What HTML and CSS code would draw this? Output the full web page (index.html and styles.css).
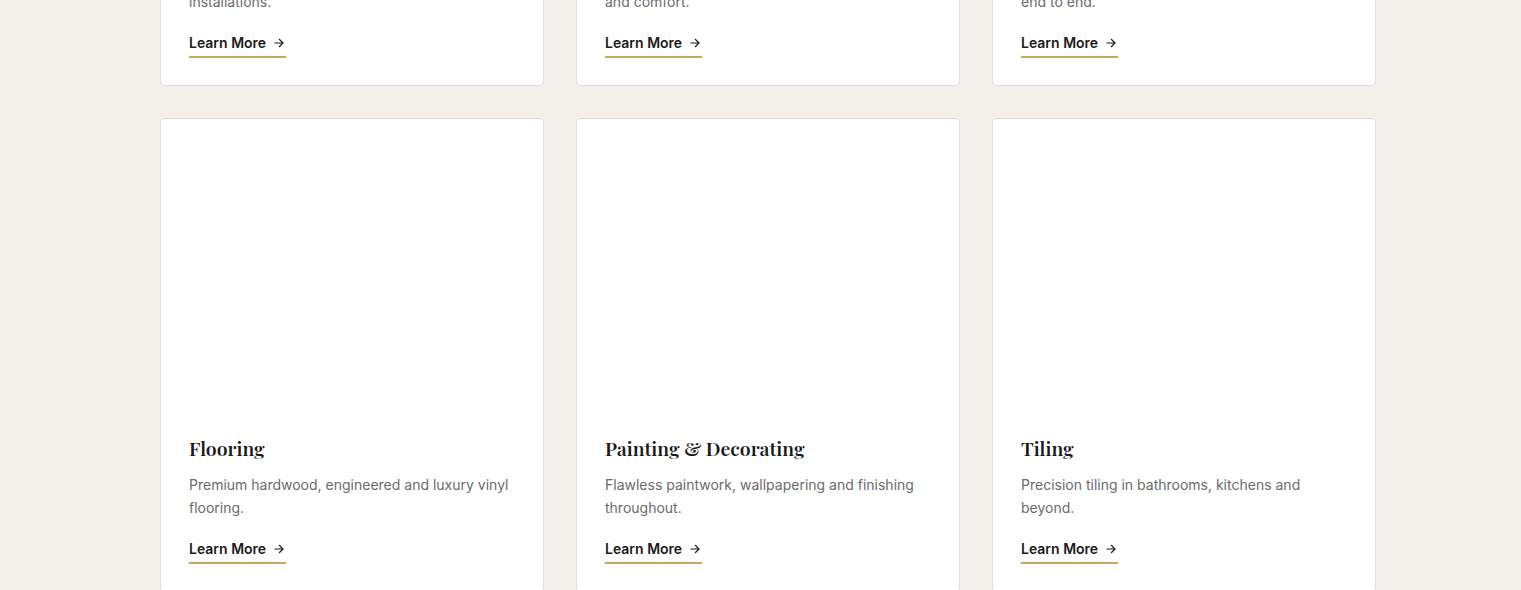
FILE: index.html
```html
<!DOCTYPE html>
<html lang="en">
<head>
    <meta charset="UTF-8">
    <meta name="viewport" content="width=device-width, initial-scale=1.0">
    <title>Our Services</title>
    <link rel="stylesheet" href="styles.css">
</head>
<body>
    <section class="services">
        <div class="service-grid">
            <div class="service-card">
                <div class="service-image"></div>
                <div class="service-body">
                    <h3>Kitchens</h3>
                    <p>Full kitchen design, cabinetry and appliance installations.</p>
                    <a class="learn-more" href="#">Learn More
                        <svg viewBox="0 0 12 12" width="12" height="12"><path d="M2 6h8M6.5 2.5L10 6l-3.5 3.5" fill="none" stroke="currentColor" stroke-width="1.2" stroke-linecap="round" stroke-linejoin="round"/></svg>
                    </a>
                </div>
            </div>
            <div class="service-card">
                <div class="service-image"></div>
                <div class="service-body">
                    <h3>Heating</h3>
                    <p>Efficient heating upgrades for lasting warmth and comfort.</p>
                    <a class="learn-more" href="#">Learn More
                        <svg viewBox="0 0 12 12" width="12" height="12"><path d="M2 6h8M6.5 2.5L10 6l-3.5 3.5" fill="none" stroke="currentColor" stroke-width="1.2" stroke-linecap="round" stroke-linejoin="round"/></svg>
                    </a>
                </div>
            </div>
            <div class="service-card">
                <div class="service-image"></div>
                <div class="service-body">
                    <h3>Renovations</h3>
                    <p>Complete renovations, carefully managed from end to end.</p>
                    <a class="learn-more" href="#">Learn More
                        <svg viewBox="0 0 12 12" width="12" height="12"><path d="M2 6h8M6.5 2.5L10 6l-3.5 3.5" fill="none" stroke="currentColor" stroke-width="1.2" stroke-linecap="round" stroke-linejoin="round"/></svg>
                    </a>
                </div>
            </div>

            <div class="service-card">
                <div class="service-image"></div>
                <div class="service-body">
                    <h3>Flooring</h3>
                    <p>Premium hardwood, engineered and luxury vinyl flooring.</p>
                    <a class="learn-more" href="#">Learn More
                        <svg viewBox="0 0 12 12" width="12" height="12"><path d="M2 6h8M6.5 2.5L10 6l-3.5 3.5" fill="none" stroke="currentColor" stroke-width="1.2" stroke-linecap="round" stroke-linejoin="round"/></svg>
                    </a>
                </div>
            </div>
            <div class="service-card">
                <div class="service-image"></div>
                <div class="service-body">
                    <h3>Painting &amp; Decorating</h3>
                    <p>Flawless paintwork, wallpapering and finishing throughout.</p>
                    <a class="learn-more" href="#">Learn More
                        <svg viewBox="0 0 12 12" width="12" height="12"><path d="M2 6h8M6.5 2.5L10 6l-3.5 3.5" fill="none" stroke="currentColor" stroke-width="1.2" stroke-linecap="round" stroke-linejoin="round"/></svg>
                    </a>
                </div>
            </div>
            <div class="service-card">
                <div class="service-image"></div>
                <div class="service-body">
                    <h3>Tiling</h3>
                    <p>Precision tiling in bathrooms, kitchens and beyond.</p>
                    <a class="learn-more" href="#">Learn More
                        <svg viewBox="0 0 12 12" width="12" height="12"><path d="M2 6h8M6.5 2.5L10 6l-3.5 3.5" fill="none" stroke="currentColor" stroke-width="1.2" stroke-linecap="round" stroke-linejoin="round"/></svg>
                    </a>
                </div>
            </div>
        </div>
    </section>
</body>
</html>
```

FILE: styles.css
```css
body {
    margin: 0;
    padding: 0;
    background-color: #f3f0eb;
    font-family: Inter, "Liberation Sans", Arial, sans-serif;
    color: #1a1a1a;
    overflow: hidden;
}

/* page is shown scrolled part way down the services list */
.services {
    padding: 0 145px 0 160px;
    margin-top: -388px;
}

.service-grid {
    width: 1216px;
    display: grid;
    grid-template-columns: repeat(3, 1fr);
    gap: 32px;
}

.service-card {
    background-color: #ffffff;
    border: 1px solid #e2ddd5;
    border-radius: 4px;
    display: flex;
    flex-direction: column;
    overflow: hidden;
}

.service-image {
    height: 287px;
    background-color: #ffffff;
}

.service-body {
    padding: 28px 28px 27px;
    display: flex;
    flex-direction: column;
    align-items: flex-start;
}

.service-body h3 {
    margin: 0 0 11px 0;
    font-family: "Playfair Display", "Liberation Serif", "Times New Roman", serif;
    font-size: 19.4px;
    font-weight: 600;
    line-height: 28px;
    color: #1a1a1a;
}

.service-body p {
    margin: 0;
    font-size: 14px;
    line-height: 23px;
    color: #6b6b6b;
}

.learn-more {
    margin-top: 20px;
    display: inline-flex;
    align-items: center;
    gap: 7px;
    font-size: 14px;
    font-weight: 600;
    line-height: 20px;
    color: #1a1a1a;
    text-decoration: none;
    padding-bottom: 3px;
    border-bottom: 2px solid #c8a765;
}

.learn-more svg {
    margin-right: 1px;
}
```
